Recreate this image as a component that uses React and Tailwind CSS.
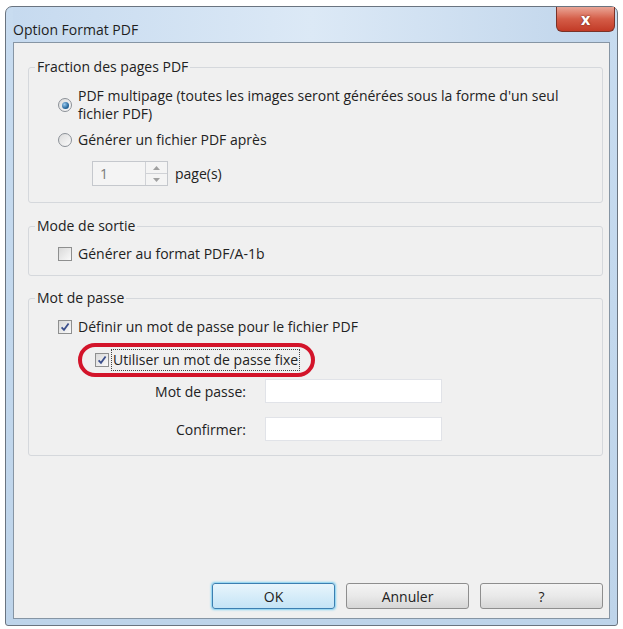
import React from 'react';

// Win7-style radio button
const Radio = ({ checked }) => (
  <span className="flex h-[14px] w-[14px] shrink-0 items-center justify-center rounded-full border border-[#8b9097] bg-gradient-to-br from-[#dcdcdc] to-[#fbfbfb]">
    {checked && (
      <span className="h-[7px] w-[7px] rounded-full bg-[radial-gradient(circle_at_35%_35%,#9ccbef,#2a6a9e_60%,#174a73)]" />
    )}
  </span>
);

// Win7-style checkbox
const Check = ({ checked }) => (
  <span className="flex h-[14px] w-[14px] shrink-0 items-center justify-center border border-[#8e8f8f] bg-gradient-to-br from-[#d9d9d9] to-[#fafafa]">
    {checked && (
      <svg width="10" height="10" viewBox="0 0 10 10">
        <path d="M1.6 5.3 L4 7.9 L8.6 1.5" fill="none" stroke="#3b4f8c" strokeWidth="1.8" />
      </svg>
    )}
  </span>
);

const Group = ({ title, className, children }) => (
  <fieldset className={`rounded-[3px] border border-[#d5d8dc] ${className}`}>
    <legend className="ml-[6px] px-[2px] leading-[18px]">{title}</legend>
    {children}
  </fieldset>
);

const Button = ({ children, primary }) => (
  <button
    className={
      primary
        ? 'h-[26px] w-[123px] rounded-[3px] border border-[#3c7fb1] bg-gradient-to-b from-[#e8f5fc] to-[#c4e4f6] shadow-[0_0_2px_1px_#7fd0f2]'
        : 'h-[26px] w-[123px] rounded-[3px] border border-[#8e8e8e] bg-gradient-to-b from-[#f4f4f4] via-[#e9e9e9] to-[#d6d6d6]'
    }
  >
    {children}
  </button>
);

const App = () => {
  return (
    <div className="h-[629px] w-[623px] bg-white pl-[5px] pt-[6px] font-['Open_Sans','Noto_Sans',sans-serif] text-[14px] text-[#222]">
      <div className="flex h-[620px] w-[613px] flex-col rounded-t-[7px] rounded-b-[3px] border border-[#6a7480] bg-gradient-to-b from-[#c8dcf0] to-[#bed4ea] px-[7px] pb-[6px]">
        {/* Barre de titre */}
        <div className="flex h-[35px] shrink-0 items-start justify-between bg-gradient-to-r from-[#c6daef] via-[#dce9f6] to-[#c0d5eb]">
          <span className="pt-[12px] text-[14px] text-[#1e1e1e]">Option Format PDF</span>
          <button className="-mr-[5px] flex h-[25px] w-[59px] items-center justify-center rounded-b-[6px] border border-t-0 border-[#7a3228] bg-gradient-to-b from-[#e9a596] via-[#d45c47] to-[#c23a26]">
            <span className="text-[16px] font-bold leading-none text-white [text-shadow:0_0_2px_#5a1a10]">x</span>
          </button>
        </div>

        {/* Zone cliente */}
        <div className="flex flex-1 flex-col border border-[#8695a4] bg-[#f0f0f0] pb-[9px] pl-[14px] pr-[6px]">
          <Group title="Fraction des pages PDF" className="mt-[15px]">
            <div className="pb-[16px] pl-[29px] pt-[11px] leading-[17px]">
              <div className="flex items-center gap-[6px]">
                <Radio checked />
                <span className="leading-[18px]">
                  PDF multipage (toutes les images seront générées sous la forme d'un seul
                  <br />
                  fichier PDF)
                </span>
              </div>
              <div className="mt-[8px] flex items-center gap-[6px]">
                <Radio />
                <span>Générer un fichier PDF après</span>
              </div>
              <div className="ml-[34px] mt-[13px] flex items-center gap-[7px]">
                <div className="flex h-[25px] w-[76px] border border-[#c5c8cd] bg-[#f4f4f4]">
                  <span className="flex-1 pl-[7px] leading-[23px] text-[#7a7a7a]">1</span>
                  <div className="flex w-[22px] flex-col border-l border-[#d0d2d6]">
                    <div className="flex flex-1 items-center justify-center border-b border-[#d0d2d6]">
                      <svg width="7" height="4" viewBox="0 0 7 4"><path d="M0 4 L3.5 0 L7 4 Z" fill="#a0a0a0" /></svg>
                    </div>
                    <div className="flex flex-1 items-center justify-center">
                      <svg width="7" height="4" viewBox="0 0 7 4"><path d="M0 0 L3.5 4 L7 0 Z" fill="#a0a0a0" /></svg>
                    </div>
                  </div>
                </div>
                <span>page(s)</span>
              </div>
            </div>
          </Group>

          <Group title="Mode de sortie" className="mt-[14px]">
            <div className="pb-[13px] pl-[29px] pt-[10px] leading-[17px]">
              <div className="flex items-center gap-[6px]">
                <Check />
                <span>Générer au format PDF/A-1b</span>
              </div>
            </div>
          </Group>

          <Group title="Mot de passe" className="mt-[13px]">
            <div className="pb-[14px] pl-[29px] pt-[11px] leading-[17px]">
              <div className="flex items-center gap-[6px]">
                <Check checked />
                <span>Définir un mot de passe pour le fichier PDF</span>
              </div>
              <div className="relative ml-[37px] mt-[14px] flex h-[22px] items-center gap-[2px]">
                <Check checked />
                <span className="border border-dotted border-[#444] px-[1px] leading-[20px]">Utiliser un mot de passe fixe</span>
                {/* entourage rouge */}
                <span className="pointer-events-none absolute -left-[17px] -top-[6px] h-[34px] w-[237px] rounded-full border-[4px] border-[#d3142a]" />
              </div>
              <div className="mt-[8px] flex items-center">
                <span className="w-[188px] text-right">Mot de passe:</span>
                <input className="ml-[19px] h-[24px] w-[177px] border border-[#e1e3e8] bg-white outline-none" />
              </div>
              <div className="mt-[14px] flex items-center">
                <span className="w-[188px] text-right">Confirmer:</span>
                <input className="ml-[19px] h-[24px] w-[177px] border border-[#e1e3e8] bg-white outline-none" />
              </div>
            </div>
          </Group>

          <div className="mt-auto flex justify-end gap-[11px]">
            <Button primary>OK</Button>
            <Button>Annuler</Button>
            <Button>?</Button>
          </div>
        </div>
      </div>
    </div>
  );
};

export default App;
